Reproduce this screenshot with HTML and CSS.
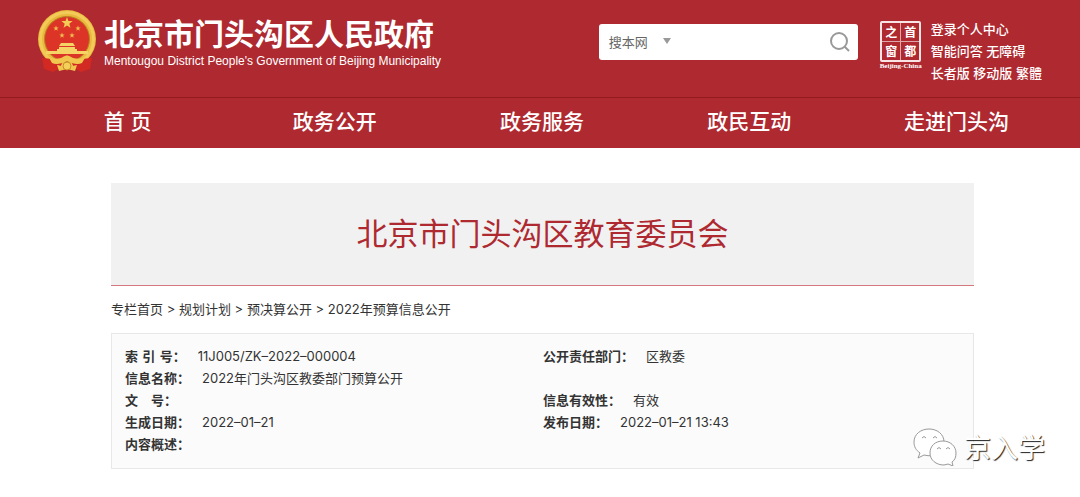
FILE: index.html
```html
<!DOCTYPE html>
<html lang="zh-CN">
<head>
<meta charset="utf-8">
<title>北京市门头沟区教育委员会</title>
<link rel="stylesheet" href="styles.css">
</head>
<body>
<header class="site-header">
  <div class="topbar">
    <div class="brand">
      <svg class="emblem" viewBox="0 0 60 64" aria-hidden="true">
        <path fill="#c8161d" d="M7 46 L53 46 L52 60 L44 62 L37 59 L30 62 L23 59 L16 62 L8 60Z"/>
        <circle cx="30" cy="30" r="29" fill="#e9b93d"/>
        <circle cx="30" cy="30" r="26.500" fill="none" stroke="#f2cb58" stroke-width="3"/>
        <circle cx="30" cy="30" r="22.500" fill="#dc3528" stroke="#b98320"/>
        <path fill="#f3cc55" d="M30 8l1.400 4 4.200.1-3.300 2.600 1.200 4.100-3.500-2.400-3.500 2.400 1.200-4.100-3.300-2.600 4.200-.1z"/>
        <g fill="#f0bc4c">
          <path id="star" d="M19 16.500l.7 1.900 2 .1-1.600 1.200.6 2-1.700-1.200-1.700 1.200.6-2-1.600-1.200 2-.1z"/>
          <use href="#star" x="22"/><use href="#star" x="6" y="7"/><use href="#star" x="16" y="7"/>
        </g>
        <path fill="#f6d365" d="M24 34h12l2 3H22zM22 38h16v2h2v4H20v-4h2zM9 42h42v3H9z"/>
        <path fill="#d22922" d="M5 49l11 1 3 5 7-3-3 7-7 4-9-3zM55 49l-11 1-3 5-7-3 3 7 7 4 9-3z"/>
        <path fill="#f1c64e" d="M11 47c6 4 11 3 15 1 3-2 5-2 8 0 4 2 9 3 15-1l-4 7c-4 2-9 1-15-2-6 3-11 4-15 2zM20 56l10 2 10-2-2 6-8-2-8 2z"/>
        <circle cx="30" cy="57" r="4" fill="#f4cf5a" stroke="#c88c27"/>
      </svg>
      <div>
        <div class="brand-name">北京市门头沟区人民政府</div>
        <div class="brand-sub">Mentougou District People's Government of Beijing Municipality</div>
      </div>
    </div>
    <form class="search">
      <select class="search-scope" aria-label="搜索范围"><option>搜本网</option></select>
      <svg class="caret" viewBox="0 0 8 6" aria-hidden="true"><path d="M0 0h8L4 6z"/></svg>
      <input class="search-text" type="text" aria-label="搜索内容">
      <button class="search-button" type="button" aria-label="搜索">
        <svg viewBox="0 0 20 20" aria-hidden="true"><circle cx="9" cy="9" r="8"/><path d="M14.500 14.500l4.500 4.500"/></svg>
      </button>
    </form>
    <a class="capital" href="#">
      <span class="seal"><span>之</span><span>首</span><span>窗</span><span>都</span></span>
      <span class="capital-sub">Beijing-China</span>
    </a>
    <div class="tools">
      <div><a href="#">登录个人中心</a></div>
      <div><a href="#">智能问答</a> <a href="#">无障碍</a></div>
      <div><a href="#">长者版</a> <a href="#">移动版</a> <a href="#">繁體</a></div>
    </div>
  </div>
  <nav class="nav">
    <a href="#">首 页</a>
    <a href="#">政务公开</a>
    <a href="#">政务服务</a>
    <a href="#">政民互动</a>
    <a href="#">走进门头沟</a>
  </nav>
</header>
<main class="content">
  <h1 class="banner">北京市门头沟区教育委员会</h1>
  <div class="crumbs"><a href="#">专栏首页</a> &gt; <a href="#">规划计划</a> &gt; <a href="#">预决算公开</a> &gt; <a href="#">2022年预算信息公开</a></div>
  <dl class="info">
    <div class="field"><dt>索&#8196;引&#8196;号：</dt><dd>11J005/ZK–2022–000004</dd></div>
    <div class="field"><dt>公开责任部门：</dt><dd>区教委</dd></div>
    <div class="field wide"><dt>信息名称：</dt><dd>2022年门头沟区教委部门预算公开</dd></div>
    <div class="field"><dt>文&#8196;&#8196;&#8196;号：</dt><dd></dd></div>
    <div class="field"><dt>信息有效性：</dt><dd>有效</dd></div>
    <div class="field"><dt>生成日期：</dt><dd>2022–01–21</dd></div>
    <div class="field"><dt>发布日期：</dt><dd>2022–01–21 13:43</dd></div>
    <div class="field wide"><dt>内容概述：</dt><dd></dd></div>
  </dl>
</main>
<div class="watermark">
  <svg viewBox="0 0 44 38" aria-hidden="true">
    <path d="M16 1C8 1 1 6 1 14c0 5 2 8 6 11l-2 5 6-3c11 3 20-3 20-13C31 6 24 1 16 1z"/>
    <path d="M30 13c-8 0-13 5-13 12s6 12 14 12l4-1 5 2-1-4c3-2 4-5 4-9 0-7-6-12-13-12z"/>
    <path d="M9 10q2-3 4 0M20 10q2-3 4 0M24 21q2-3 4 0M33 21q2-3 4 0"/>
  </svg>
  <span>京入学</span>
</div>
</body>
</html>
```
FILE: styles.css
```css
* {
  box-sizing: border-box;
}

body {
  margin: 0;
  background: #fff;
  color: #333;
  font: 13px/22px Inter, "Noto Sans CJK SC", sans-serif;
}

a {
  color: inherit;
  text-decoration: none;
}

.site-header {
  background: #ae2930;
  color: #fff;
}

.topbar {
  display: flex;
  align-items: flex-start;
  padding: 9px 37px 0;
  height: 97px;
}

.brand {
  display: flex;
  gap: 7px;
  flex: 1;
}

.emblem {
  width: 60px;
  height: 64px;
}

.brand-name {
  padding-top: 5px;
  font: bold 30px/36px "Noto Sans CJK SC", sans-serif;
  white-space: nowrap;
}

.brand-sub {
  padding-top: 3px;
  font: 12px/16px "Liberation Sans", sans-serif;
  white-space: nowrap;
}

.search {
  display: flex;
  align-items: center;
  width: 259px;
  height: 36px;
  margin: 15px 21px 0 0;
  padding: 0 8px 0 10px;
  border-radius: 3px;
  background: #fff;
}

.search-scope {
  appearance: none;
  width: 54px;
  padding: 0;
  border: 0;
  background: none;
  color: #666;
  font: 13px/22px "Noto Sans CJK SC", sans-serif;
}

.caret {
  width: 8px;
  height: 6px;
  margin-bottom: 3px;
  fill: #999;
}

.search-text {
  flex: 1;
  min-width: 0;
  border: 0;
  outline: 0;
  background: none;
}

.search-button {
  width: 20px;
  height: 20px;
  padding: 0;
  border: 0;
  background: none;
}

.search-button svg {
  display: block;
  fill: none;
  stroke: #999;
  stroke-width: 2;
}

.capital {
  display: flex;
  flex-direction: column;
  align-items: center;
  width: 44px;
  margin: 12px 8px 0 0;
}

.seal {
  display: grid;
  grid-template-columns: 1fr 1fr;
  gap: 1px;
  width: 41px;
  height: 41px;
  border: 2px solid #f8e4e5;
  border-radius: 2px;
  background: #e0a5a8;
}

.seal span {
  background: #ae2930;
  font: bold 12px/18px "Noto Sans CJK SC", sans-serif;
  text-align: center;
}

.capital-sub {
  font: bold 7px/8px "Liberation Serif", serif;
  white-space: nowrap;
}

.tools {
  padding-top: 10px;
  margin-right: 1px;
  font-family: "Liberation Sans", "Noto Sans CJK SC", sans-serif;
  font-weight: 500;
  white-space: nowrap;
}

.nav {
  display: grid;
  grid-template-columns: repeat(5, 1fr);
  height: 51px;
  padding: 0 20px 0 24px;
  border-top: 1px solid #941a20;
  font: 500 21px/48px "Liberation Sans", "Noto Sans CJK SC", sans-serif;
  text-align: center;
}

.content {
  padding: 35px 106px 28px 111px;
}

.banner {
  margin: 0;
  padding: 27px 0 31px;
  border-bottom: 1px solid #d5787d;
  background: #f1f1f1;
  color: #ae2930;
  font: 31px/44px "Noto Sans CJK SC", sans-serif;
  text-align: center;
}

.crumbs {
  margin: 12px 0 13px;
}

.info {
  display: grid;
  grid-template-columns: 418px 1fr;
  margin: 0;
  padding: 11px 13px 13px;
  border: 1px solid #e8e8e8;
  background: #fbfbfb;
}

.field {
  display: flex;
  gap: 12px;
  min-height: 22px;
}

.wide {
  grid-column: 1 / -1;
}

.field dt {
  font-weight: bold;
}

.field dd {
  margin: 0;
}

.watermark {
  position: absolute;
  right: 35px;
  bottom: 30px;
  display: flex;
  align-items: center;
  gap: 7px;
  color: #fff;
  font: 27px/40px "Noto Sans CJK SC", sans-serif;
  text-shadow: 1px 1px 1px #222;
}

.watermark svg {
  width: 44px;
  height: 38px;
  fill: #fff;
  stroke: #999;
  stroke-width: 1;
}
```
